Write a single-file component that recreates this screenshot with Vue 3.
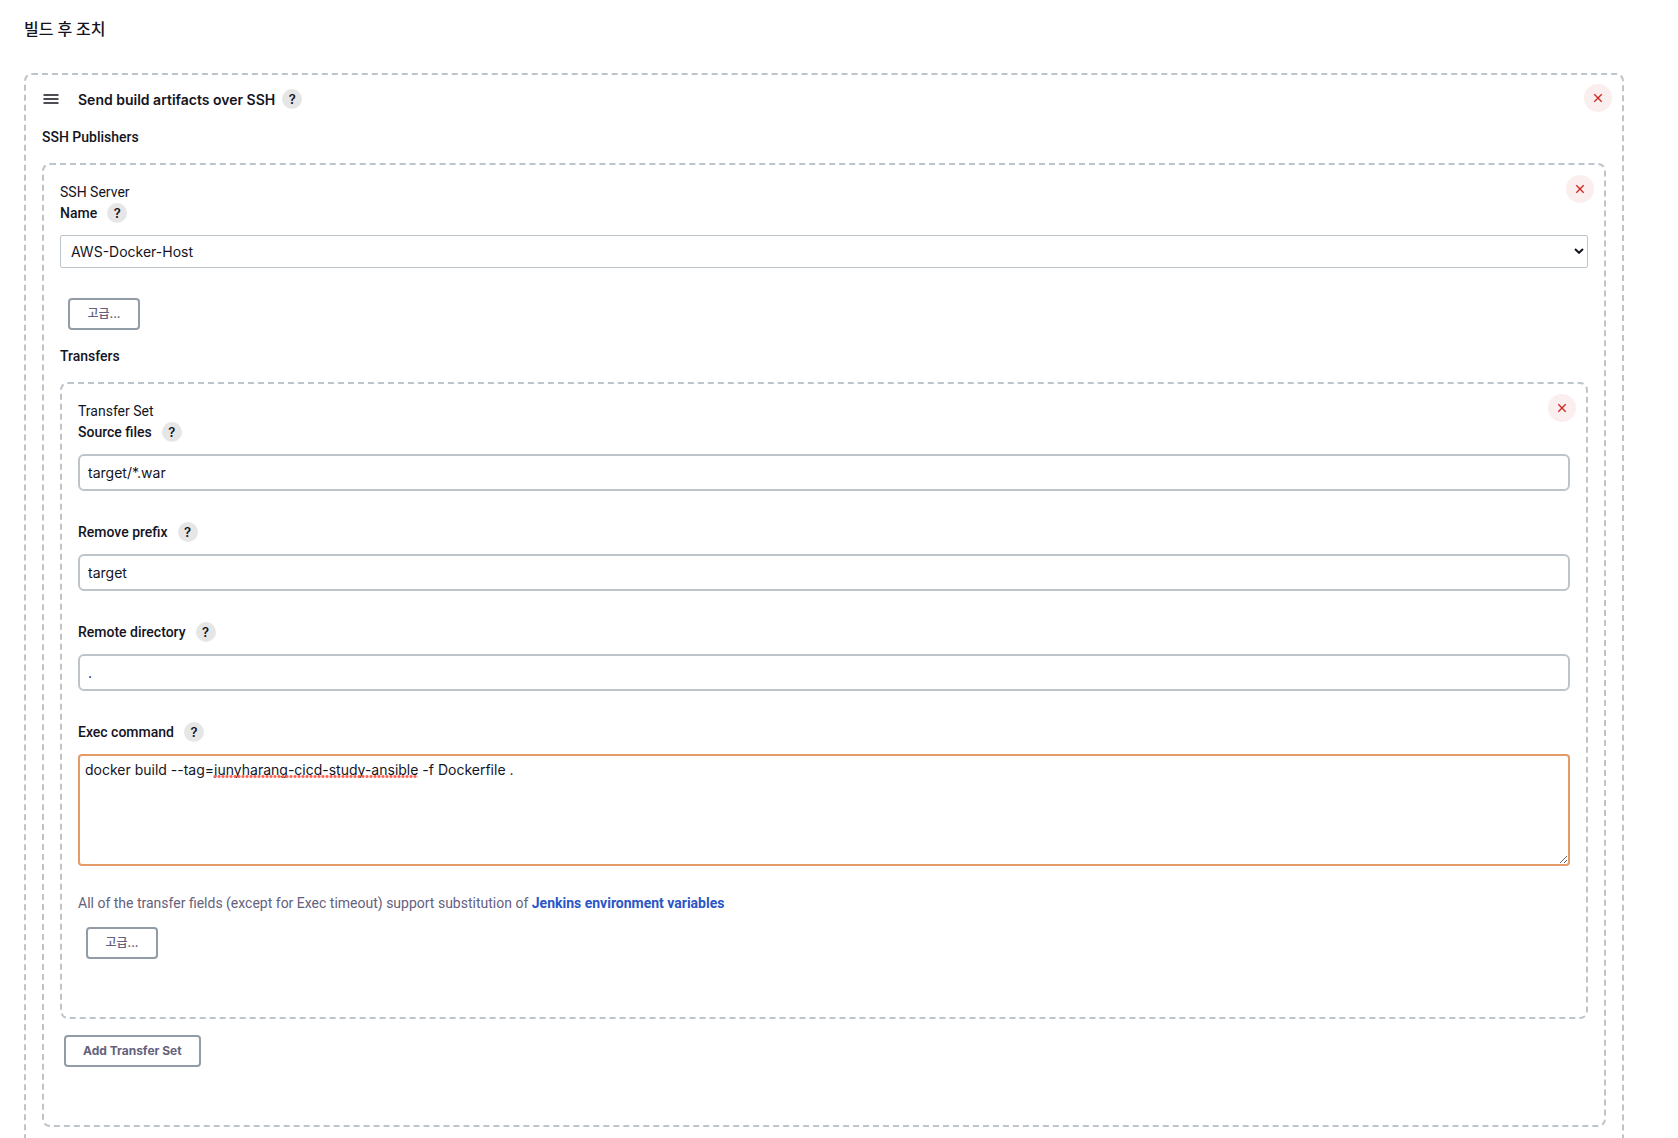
<script setup>
import { reactive, ref } from 'vue'

const server = ref('AWS-Docker-Host')

const fields = reactive([
  { id: 'source-files', label: 'Source files', value: 'target/*.war' },
  { id: 'remove-prefix', label: 'Remove prefix', value: 'target' },
  { id: 'remote-directory', label: 'Remote directory', value: '.' },
])

const command = ref('docker build --tag=junyharang-cicd-study-ansible -f Dockerfile .')
</script>

<template>
  <main class="page">
    <h1 class="page-title">빌드 후 조치</h1>

    <section class="chunk publisher">
      <button class="remove" type="button" aria-label="Remove publisher">
        <svg viewBox="0 0 10 10" aria-hidden="true"><path d="M1.3 1.3l7.4 7.4M8.7 1.3L1.3 8.7" /></svg>
      </button>
      <header class="chunk-header">
        <svg class="handle" viewBox="0 0 16 10" aria-hidden="true">
          <path d="M0.5 1h15M0.5 9h15" />
          <path class="handle-middle" d="M0.5 5h15" />
        </svg>
        <h2 class="chunk-title">Send build artifacts over SSH</h2>
        <button class="help" type="button">?</button>
      </header>
      <div class="group-label">SSH Publishers</div>

      <section class="chunk">
        <button class="remove" type="button" aria-label="Remove server">
          <svg viewBox="0 0 10 10" aria-hidden="true"><path d="M1.3 1.3l7.4 7.4M8.7 1.3L1.3 8.7" /></svg>
        </button>
        <div class="set-name">SSH Server</div>
        <div class="label-row">
          <label for="server">Name</label>
          <button class="help" type="button">?</button>
        </div>
        <div class="select-wrap">
          <select id="server" v-model="server">
            <option>AWS-Docker-Host</option>
          </select>
          <svg class="chevron" viewBox="0 0 10 6" aria-hidden="true"><path d="M1 1l4 3.8L9 1" /></svg>
        </div>
        <button class="action advanced" type="button">고급...</button>
        <div class="group-label transfers-label">Transfers</div>

        <section class="chunk">
          <button class="remove" type="button" aria-label="Remove transfer set">
            <svg viewBox="0 0 10 10" aria-hidden="true"><path d="M1.3 1.3l7.4 7.4M8.7 1.3L1.3 8.7" /></svg>
          </button>
          <div class="set-name">Transfer Set</div>
          <div class="fields">
            <div v-for="field in fields" :key="field.id">
              <div class="label-row">
                <label :for="field.id">{{ field.label }}</label>
                <button class="help" type="button">?</button>
              </div>
              <input :id="field.id" v-model="field.value" class="text-input" type="text" />
            </div>
            <div>
              <div class="label-row">
                <label for="command">Exec command</label>
                <button class="help" type="button">?</button>
              </div>
              <div class="command-wrap">
                <textarea id="command" v-model="command" spellcheck="false"></textarea>
                <span class="spelling" aria-hidden="true"></span>
              </div>
            </div>
          </div>
          <p class="description">
            All of the transfer fields (except for Exec timeout) support substitution of
            <a href="#">Jenkins environment variables</a>
          </p>
          <button class="action advanced" type="button">고급...</button>
        </section>

        <button class="action add-set" type="button">Add Transfer Set</button>
      </section>
    </section>
  </main>
</template>

<style>
body {
  margin: 0;
  background: #fff;
}
</style>

<style scoped>
.page {
  box-sizing: border-box;
  height: 100vh;
  overflow: hidden;
  padding: 18px 54px 0 24px;
  color: #14141f;
  font-family: Roboto, "Noto Sans CJK KR", sans-serif;
  font-size: 14px;
  line-height: 20px;
}

.page-title {
  margin: 0 0 31px;
  font-size: 16px;
  font-weight: 500;
  line-height: 24px;
}

.chunk {
  position: relative;
  border: 2px dashed #bdc4ca;
  border-radius: 8px;
  padding: 16px 16px 58px;
}

.publisher {
  padding-top: 14px;
}

.chunk-header {
  display: flex;
  align-items: center;
  height: 20px;
  margin-bottom: 18px;
}

.handle {
  width: 16px;
  height: 10px;
  margin: 0 19px 0 1px;
  fill: none;
  stroke: #14141f;
  stroke-width: 1.4;
}

.handle-middle {
  stroke: #4a4a52;
  stroke-width: 2;
}

.chunk-title {
  margin: 0 7px 0 0;
  padding-top: 2px;
  font-family: Inter, sans-serif;
  font-size: 14px;
  font-weight: 600;
}

.group-label {
  margin-bottom: 16px;
  font-weight: 500;
}

.set-name {
  padding: 1px 0;
}

.label-row {
  display: flex;
  align-items: center;
  gap: 10px;
  height: 20px;
  margin-bottom: 12px;
  font-weight: 500;
}

.help {
  width: 20px;
  height: 20px;
  border: 0;
  border-radius: 50%;
  padding: 0;
  background: #e6e6e6;
  color: #14141f;
  font: 600 13px/20px Inter, sans-serif;
}

.remove {
  position: absolute;
  top: 10px;
  right: 10px;
  display: flex;
  align-items: center;
  justify-content: center;
  width: 28px;
  height: 28px;
  border: 0;
  border-radius: 50%;
  padding: 0;
  background: #fbeeee;
}

.publisher > .remove {
  top: 9px;
}

.remove svg {
  width: 10px;
  height: 10px;
  fill: none;
  stroke: #d0261f;
  stroke-width: 1.3;
}

.select-wrap {
  position: relative;
  margin-bottom: 30px;
}

select {
  display: block;
  box-sizing: border-box;
  width: 100%;
  height: 33px;
  appearance: none;
  border: 1px solid #bdc4ca;
  border-radius: 2px;
  padding: 0 10px;
  background: #fff;
  color: inherit;
  font: 14px/20px Inter, sans-serif;
}

.chevron {
  position: absolute;
  top: 13px;
  right: 4px;
  width: 10px;
  height: 6px;
  fill: none;
  stroke: #14141f;
  stroke-width: 2;
  pointer-events: none;
}

.action {
  display: block;
  height: 32px;
  border: 2px solid #929ca6;
  border-radius: 4px;
  padding: 0 17px;
  background: #fff;
  color: #64617d;
  font: 700 12px/16px Inter, "Noto Sans CJK KR", sans-serif;
}

.advanced {
  min-width: 72px;
  margin-left: 8px;
  font-weight: 500;
}

.transfers-label {
  margin-top: 16px;
}

.fields {
  display: flex;
  flex-direction: column;
  gap: 31px;
  margin-bottom: 27px;
}

.text-input {
  display: block;
  box-sizing: border-box;
  width: 100%;
  height: 37px;
  border: 2px solid #bdc4ca;
  border-radius: 6px;
  padding: 0 8px;
  color: inherit;
  font: 14px/20px Inter, sans-serif;
}

.command-wrap {
  position: relative;
}

textarea {
  display: block;
  box-sizing: border-box;
  width: 100%;
  height: 112px;
  border: 2px solid #e59b67;
  border-radius: 4px;
  outline: 0;
  padding: 4px 5px;
  color: inherit;
  font: 14px/20px Inter, sans-serif;
  resize: vertical;
}

.spelling {
  position: absolute;
  top: 21px;
  left: 135px;
  width: 205px;
  height: 3px;
  background: radial-gradient(circle, #ff6352 1px, transparent 2px) 0 0 / 4px 3px repeat-x;
  pointer-events: none;
}

.description {
  margin: 0 0 14px;
  color: #64617d;
}

.description a {
  color: #2a56c6;
  font-weight: 700;
  text-decoration: none;
}

.add-set {
  margin: 16px 0 0 4px;
}
</style>
